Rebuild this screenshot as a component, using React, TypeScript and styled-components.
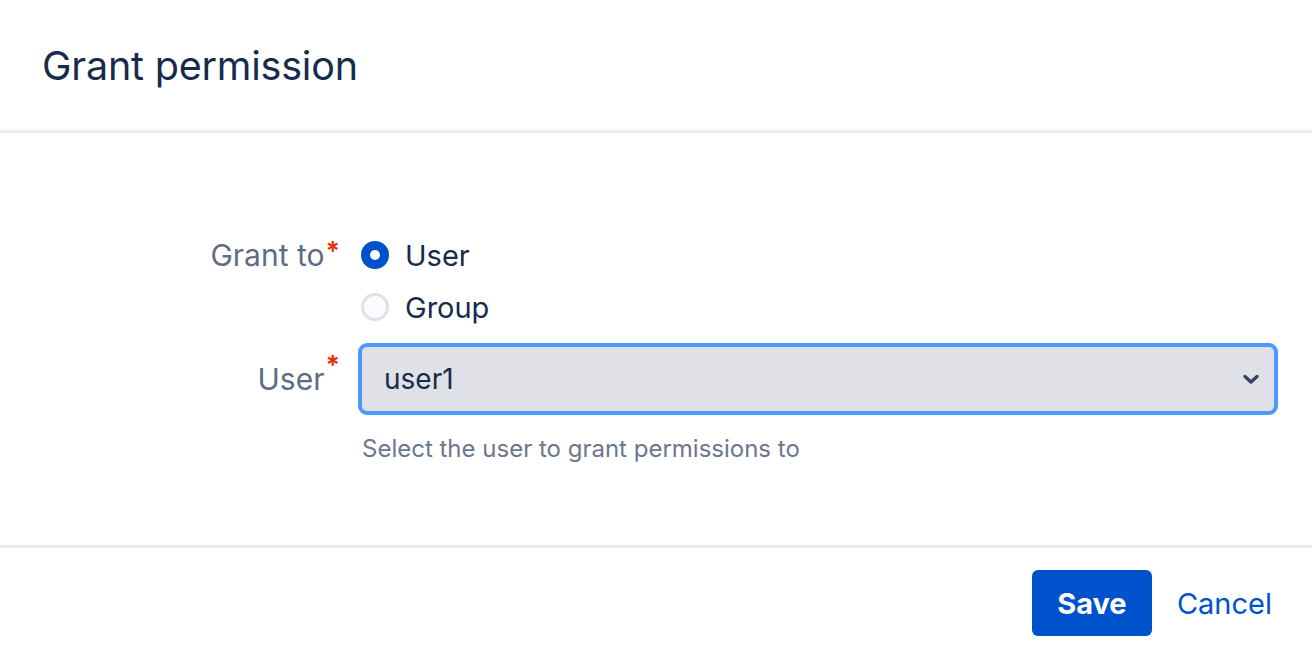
import React from "react";
import styled, { createGlobalStyle } from "styled-components";

const GlobalStyle = createGlobalStyle`
  html, body {
    margin: 0;
    padding: 0;
    background: #ffffff;
  }
  body {
    font-family: Inter, "Noto Sans", "Liberation Sans", sans-serif;
    color: #172b4d;
  }
`;

const App = () => {
  return (
    <>
      <GlobalStyle />
      <Dialog>
        <Header>
          <Title>Grant permission</Title>
        </Header>
        <Body>
          <Form>
            <Label>
              Grant to<Required>*</Required>
            </Label>
            <RadioGroup>
              <RadioRow>
                <Radio checked />
                <RadioText>User</RadioText>
              </RadioRow>
              <RadioRow>
                <Radio />
                <RadioText>Group</RadioText>
              </RadioRow>
            </RadioGroup>

            <Label $select>
              User<Required>*</Required>
            </Label>
            <Field>
              <Select>
                <SelectValue>user1</SelectValue>
                <svg width="18" height="12" viewBox="0 0 18 12">
                  <path
                    d="M3 3.5 L9 9 L15 3.5"
                    fill="none"
                    stroke="#344563"
                    strokeWidth="3.4"
                    strokeLinecap="round"
                    strokeLinejoin="round"
                  />
                </svg>
              </Select>
              <Help>Select the user to grant permissions to</Help>
            </Field>
          </Form>
        </Body>
        <Footer>
          <PrimaryButton>Save</PrimaryButton>
          <LinkButton>Cancel</LinkButton>
        </Footer>
      </Dialog>
    </>
  );
};

export default App;

const Dialog = styled.div`
  display: flex;
  flex-direction: column;
  width: 100%;
  height: 658px;
`;

const Header = styled.div`
  display: flex;
  align-items: center;
  height: 130px;
  padding: 0 42px;
  border-bottom: 3px solid #ebecf0;
`;

const Title = styled.h1`
  margin: 0;
  margin-top: 2px;
  font-size: 39.5px;
  font-weight: 400;
  color: #172b4d;
  letter-spacing: -0.2px;
`;

const Body = styled.div`
  height: 415px;
  padding: 96px 34px 0 0;
  box-sizing: border-box;
  border-bottom: 3px solid #ebecf0;
`;

const Form = styled.div`
  display: grid;
  grid-template-columns: 340px 1fr;
  column-gap: 18px;
  row-gap: 10px;
`;

const Label = styled.div<{ $select?: boolean }>`
  display: flex;
  justify-content: flex-end;
  align-items: ${({ $select }) => ($select ? "center" : "flex-start")};
  height: ${({ $select }) => ($select ? "72px" : "52px")};
  line-height: 52px;
  font-size: 30px;
  color: #5e6c84;
`;

const Required = styled.span`
  color: #de350b;
  font-size: 26px;
  font-weight: 700;
  align-self: flex-start;
  line-height: 44px;
  margin-left: 1px;
`;

const RadioGroup = styled.div`
  display: flex;
  flex-direction: column;
`;

const RadioRow = styled.label`
  display: flex;
  align-items: center;
  gap: 16px;
  height: 52px;
  margin-left: 3px;
`;

const Radio = styled.span<{ checked?: boolean }>`
  width: 28px;
  height: 28px;
  box-sizing: border-box;
  border-radius: 50%;
  flex-shrink: 0;
  background: ${({ checked }) => (checked ? "#ffffff" : "#fafbfc")};
  border: ${({ checked }) =>
    checked ? "9px solid #0052cc" : "3px solid #dfe1e6"};
`;

const RadioText = styled.span`
  font-size: 29px;
  color: #172b4d;
`;

const Field = styled.div`
  display: flex;
  flex-direction: column;
`;

const Select = styled.div`
  display: flex;
  align-items: center;
  justify-content: space-between;
  height: 72px;
  box-sizing: border-box;
  padding: 0 14px 0 22px;
  background: #dfe1e6;
  border: 4px solid #4c9aff;
  border-radius: 9px;
`;

const SelectValue = styled.span`
  font-size: 28px;
  color: #172b4d;
`;

const Help = styled.div`
  margin-top: 19px;
  margin-left: 4px;
  font-size: 24px;
  line-height: 30px;
  color: #6b778c;
`;

const Footer = styled.div`
  display: flex;
  justify-content: flex-end;
  align-items: center;
  gap: 25px;
  height: 110px;
  padding: 0 40px 0 0;
  box-sizing: border-box;
`;

const PrimaryButton = styled.button`
  width: 120px;
  height: 66px;
  border: none;
  border-radius: 6px;
  background: #0052cc;
  color: #ffffff;
  font-family: Inter, "Noto Sans", sans-serif;
  font-size: 29px;
  font-weight: 700;
  cursor: pointer;
`;

const LinkButton = styled.button`
  padding: 0;
  border: none;
  background: none;
  color: #0052cc;
  font-family: Inter, "Noto Sans", sans-serif;
  font-size: 29px;
  cursor: pointer;
`;
